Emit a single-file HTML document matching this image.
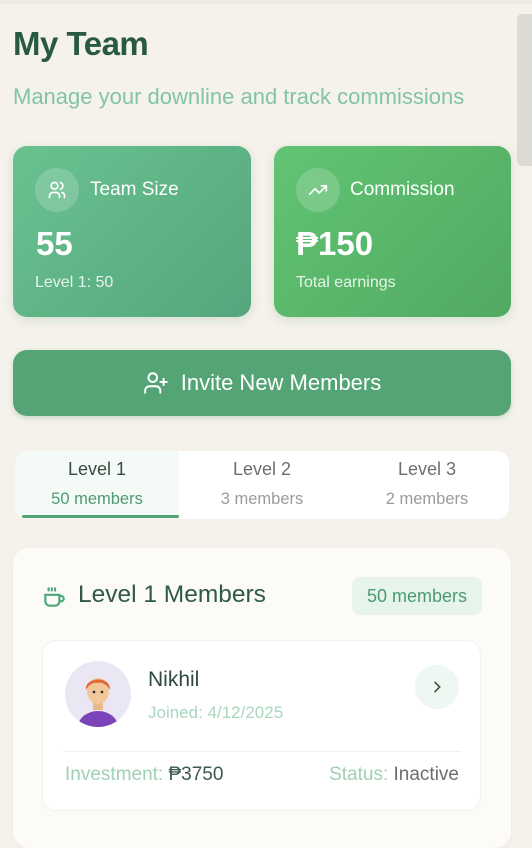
<!DOCTYPE html>
<html><head><meta charset="utf-8"><style>
*{margin:0;padding:0;box-sizing:border-box}
body{width:532px;height:836px;overflow:hidden;background:#f5f2eb;font-family:"Liberation Sans",Roboto,sans-serif;position:relative}
.a{position:absolute}
.card{border-radius:14px;color:#fff;box-shadow:0 3px 10px rgba(60,140,90,.18)}
.ic{width:44px;height:44px;border-radius:50%;background:rgba(255,255,255,.18);display:flex;align-items:center;justify-content:center}
</style></head><body>
<div class="a" style="left:0;top:0;width:532px;height:4px;background:#ecebe6"></div>
<div class="a" style="left:517px;top:14px;width:15px;height:152px;background:#dcdad4;border-radius:5px 0 0 5px"></div>
<div class="a" style="left:13px;top:25px;font-size:33px;font-weight:bold;color:#285a3f;letter-spacing:-0.5px">My Team</div>
<div class="a" style="left:13px;top:84px;font-size:22px;color:#83c4a2">Manage your downline and track commissions</div>

<div class="a card" style="left:13px;top:146px;width:238px;height:171px;background:linear-gradient(135deg,#69c290,#55a67c)">
 <div class="a ic" style="left:22px;top:22px"><svg width="20" height="20" viewBox="0 0 24 24" fill="none" stroke="#fff" stroke-width="2" stroke-linecap="round"><circle cx="9" cy="7" r="4"/><path d="M3 21v-2a4 4 0 0 1 4-4h4a4 4 0 0 1 4 4v2M16 3.1a4 4 0 0 1 0 7.8M21 21v-2a4 4 0 0 0-3-3.9"/></svg></div>
 <div class="a" style="left:77px;top:33px;font-size:19px">Team Size</div>
 <div class="a" style="left:23px;top:79px;font-size:33px;font-weight:bold">55</div>
 <div class="a" style="left:22px;top:128px;font-size:16px;opacity:.85">Level 1: 50</div>
</div>
<div class="a card" style="left:274px;top:146px;width:237px;height:171px;background:linear-gradient(135deg,#62c474,#50aa60)">
 <div class="a ic" style="left:22px;top:22px"><svg width="20" height="20" viewBox="0 0 24 24" fill="none" stroke="#fff" stroke-width="2" stroke-linecap="round" stroke-linejoin="round"><path d="M22 7l-8.5 8.5-5-5L2 17M16 7h6v6"/></svg></div>
 <div class="a" style="left:76px;top:33px;font-size:19px">Commission</div>
 <div class="a" style="left:22px;top:79px;font-size:33px;font-weight:bold">₱150</div>
 <div class="a" style="left:22px;top:128px;font-size:16px;opacity:.85">Total earnings</div>
</div>

<div class="a" style="left:13px;top:350px;width:498px;height:66px;border-radius:14px;background:#55a476;color:#fff;display:flex;align-items:center;justify-content:center;font-size:22px;box-shadow:0 2px 6px rgba(60,140,90,.25)">
 <svg width="26" height="26" viewBox="0 0 24 24" fill="none" stroke="#fff" stroke-width="1.8" stroke-linecap="round" style="margin-right:12px"><circle cx="9" cy="7" r="4"/><path d="M2 21v-2a4 4 0 0 1 4-4h6a4 4 0 0 1 4 4v2M19 8v6M16 11h6"/></svg>Invite New Members</div>

<div class="a" style="left:15px;top:451px;width:494px;height:68px;border-radius:12px;background:#fff;overflow:hidden">
 <div class="a" style="left:0;top:0;width:164px;height:68px;background:#f4faf6"></div>
 <div class="a" style="left:7px;top:64px;width:157px;height:3px;background:#55a476;border-radius:2px"></div>
 <div class="a" style="left:0;top:8px;width:164px;text-align:center;font-size:18px;color:#3a4a42">Level 1</div>
 <div class="a" style="left:0;top:39px;width:164px;text-align:center;font-size:16.5px;color:#4e9a72">50 members</div>
 <div class="a" style="left:164px;top:8px;width:166px;text-align:center;font-size:18px;color:#6b6f70">Level 2</div>
 <div class="a" style="left:164px;top:39px;width:166px;text-align:center;font-size:16.5px;color:#9a9c9c">3 members</div>
 <div class="a" style="left:330px;top:8px;width:164px;text-align:center;font-size:18px;color:#6b6f70">Level 3</div>
 <div class="a" style="left:330px;top:39px;width:164px;text-align:center;font-size:16.5px;color:#9a9c9c">2 members</div>
</div>

<div class="a" style="left:13px;top:548px;width:498px;height:300px;border-radius:16px;background:#fcfbf8;box-shadow:0 1px 4px rgba(0,0,0,.04)">
 <svg class="a" style="left:28px;top:36px" width="26" height="26" viewBox="0 0 24 24" fill="none" stroke="#4fa87a" stroke-width="2" stroke-linecap="round"><path d="M4 10h13v6a4 4 0 0 1-4 4H8a4 4 0 0 1-4-4zM17 11h1.5a2.5 2.5 0 0 1 0 5H17M7 4v2M10 4v2M13 4v2"/></svg>
 <div class="a" style="left:65px;top:33px;font-size:24.5px;color:#2f5a46">Level 1 Members</div>
 <div class="a" style="left:339px;top:29px;width:130px;height:38px;border-radius:8px;background:#e7f4ec;color:#4b9b71;font-size:18px;display:flex;align-items:center;justify-content:center">50 members</div>
 <div class="a" style="left:29px;top:92px;width:439px;height:171px;border-radius:14px;background:#fff;border:1px solid #eef4ef">
  <div class="a" style="left:22px;top:20px;width:66px;height:66px;border-radius:50%;background:#ebe6f3;overflow:hidden">
   <svg width="66" height="66" viewBox="0 0 66 66"><path d="M13 66a20 16 0 0 1 40 0z" fill="#7b44b8"/><rect x="28" y="40" width="10" height="9" fill="#e8b88a"/><ellipse cx="33" cy="30" rx="11" ry="13" fill="#f2c79a"/><path d="M21 29c-2-13 25-15 24 0c-3-6-9-8-12-7c-4-1-9 1-12 7z" fill="#e2683a"/><circle cx="29" cy="31" r="1.4" fill="#333"/><circle cx="37" cy="31" r="1.4" fill="#333"/></svg>
  </div>
  <div class="a" style="left:105px;top:27px;font-size:21px;color:#2d4a3c">Nikhil</div>
  <div class="a" style="left:105px;top:62px;font-size:17px;color:#a9d6bd">Joined: 4/12/2025</div>
  <div class="a" style="left:372px;top:24px;width:44px;height:44px;border-radius:50%;background:#eef7f1;display:flex;align-items:center;justify-content:center"><svg width="16" height="16" viewBox="0 0 24 24" fill="none" stroke="#3a5a4a" stroke-width="2.5" stroke-linecap="round"><path d="M9 5l7 7-7 7"/></svg></div>
  <div class="a" style="left:20px;top:110px;width:398px;height:1px;background:#eef2ef"></div>
  <div class="a" style="left:22px;top:123px;font-size:19px;color:#9fd0b4">Investment: <span style="color:#3a5a4a">₱3750</span></div>
  <div class="a" style="right:21px;top:123px;font-size:19px;color:#9fd0b4">Status: <span style="color:#6a6e72">Inactive</span></div>
 </div>
</div>
</body></html>
